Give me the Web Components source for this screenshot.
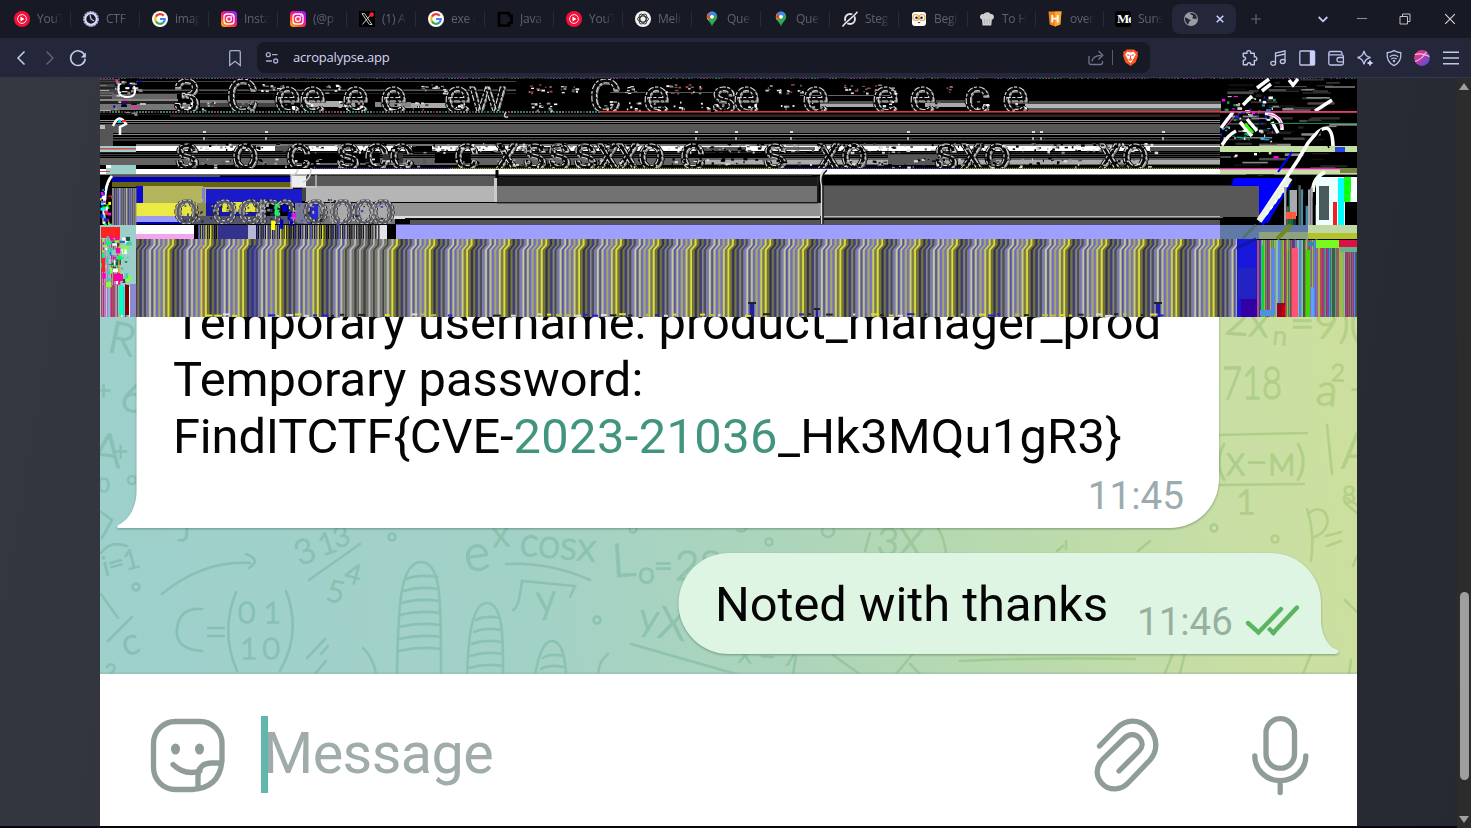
<!DOCTYPE html>
<html lang="en">
<head>
<meta charset="utf-8">
<title>acropalypse.app</title>
<style>
html,body{margin:0;height:100%;overflow:hidden;background:#171925;font-family:"Open Sans","Noto Sans",sans-serif}
</style>
</head>
<body>
<browser-window></browser-window>
<script>
const define=(name,html)=>customElements.define(name,class extends HTMLElement{
  connectedCallback(){
    if(this.shadowRoot)return;
    const t=document.createElement('template');
    t.innerHTML=typeof html==='function'?html(this):html;
    this.attachShadow({mode:'open'}).append(t.content.cloneNode(true));
  }
});

/* ---------- icons ---------- */
const yt='<circle cx="8" cy="8" r="8" fill="#f5103a"/><circle cx="8" cy="8" r="4.4" fill="none" stroke="#fff" stroke-width=".9"/><path d="M6.5 5.6v4.8L10.4 8z" fill="#fff"/>';
const google='<circle cx="8" cy="8" r="8" fill="#fff"/><g fill="none" stroke-width="2.2"><path d="M11.7 4.7A4.8 4.8 0 0 0 3.8 5.8" stroke="#ea4335"/><path d="M3.8 5.8a4.8 4.8 0 0 0 0 4.5" stroke="#fbbc05"/><path d="M3.8 10.3a4.8 4.8 0 0 0 7.4 1.3" stroke="#34a853"/><path d="M11.2 11.6A4.7 4.7 0 0 0 12.8 8H8" stroke="#4285f4"/></g>';
const insta='<defs><linearGradient id="g" x1="0" y1="1" x2=".8" y2="0"><stop offset="0" stop-color="#ffc21a"/><stop offset=".35" stop-color="#ff4a2a"/><stop offset=".65" stop-color="#f0109a"/><stop offset="1" stop-color="#a020f0"/></linearGradient></defs><rect width="16" height="16" rx="3.5" fill="url(#g)"/><rect x="3" y="3" width="10" height="10" rx="3" fill="none" stroke="#fff" stroke-width="1.3"/><circle cx="8" cy="8" r="2.4" fill="none" stroke="#fff" stroke-width="1.3"/><circle cx="10.9" cy="5.1" r=".8" fill="#fff"/>';
const pin='<path d="M8 .6a5.2 5.2 0 0 0-5.2 5.2C2.800 9.700 7 11 8 15.600 9 11 13.200 9.700 13.200 5.800A5.200 5.200 0 0 0 8 .6z" fill="#34a853"/><path d="M2.900 6.700A5.200 5.200 0 0 1 4 2.500L7 5.500 3.900 9.200z" fill="#fbbc04"/><path d="M4 2.500 7.200 5.200 4.400 8.500 2.800 6z" fill="#ea4335"/><path d="M4 2.400A5.200 5.200 0 0 1 12.500 3.200L9.500 6.500 7 5z" fill="#4285f4"/><circle cx="8" cy="5.800" r="1.900" fill="#fff"/>';
const ICONS={
 yt,google,insta,pin,
 ctf:'<circle cx="8" cy="8" r="6.700" fill="none" stroke="#a9a9dc" stroke-width="2.400" stroke-dasharray="2.200 .5"/><circle cx="8" cy="8" r="5.700" fill="none" stroke="#dcdcf4" stroke-width="1.900"/><path d="M7 4l1 4 3 2" fill="none" stroke="#b9b9e6" stroke-width="1.300"/>',
 x:'<rect width="16" height="16" fill="#000"/><path d="M3 2.700h2.600l7.400 10.800h-2.600zM12.500 2.700 3.400 13.500" fill="none" stroke="#ccc" stroke-width="1"/><circle cx="12.700" cy="3.600" r="2.300" fill="#f4212e"/>',
 java:'<path d="M2 2h10v2.500h2.500V12H12v2.500H2z" fill="none" stroke="#000" stroke-width="2.700"/>',
 gpt:'<circle cx="8" cy="8" r="8" fill="#f4f4f4"/><g fill="none" stroke="#333" stroke-width="1"><ellipse cx="8" cy="8" rx="5.400" ry="3"/><ellipse cx="8" cy="8" rx="5.400" ry="3" transform="rotate(60 8 8)"/><ellipse cx="8" cy="8" rx="5.400" ry="3" transform="rotate(120 8 8)"/></g>',
 slash:'<circle cx="8" cy="8" r="5" fill="none" stroke="#e4e4e4" stroke-width="1.900"/><path d="M2.500 13 13.500 2.500" stroke="#171925" stroke-width="3"/><path d="M.5 15.500c4-5.500 9.500-8 15-14.800" fill="none" stroke="#e4e4e4" stroke-width="1.500"/>',
 face:'<rect x="1" y="1" width="14" height="14" rx="3" fill="#fff"/><g fill="#fff" stroke="#e9a54e" stroke-width="1.100"><circle cx="4.900" cy="6.500" r="3"/><circle cx="11.100" cy="6.500" r="3"/></g><circle cx="5.500" cy="6.800" r="1.300" fill="#222"/><circle cx="10.500" cy="6.800" r="1.300" fill="#222"/><path d="M6.800 11.300q1.200 1 2.400 0" stroke="#333" fill="none"/>',
 chef:'<path d="M3.500 14.500 3 8.500C-.5 7.500 1 2 4.500 3.200 6 .5 10.500.5 11.500 3 15 2.200 16.500 7.500 12.800 8.800l-.5 5.700z" fill="#cfcfcf"/><path d="M5.500 8v5M8 8v5M10.500 8v5" stroke="#aaa" stroke-width=".7"/>',
 hack:'<path d="M1.500.5h13l-1.200 13L8 15.500l-5.300-2z" fill="#ee8420"/><path d="M8 .5h6.500l-1.200 13L8 15.500z" fill="#ffa62b"/><path d="M5.300 4v7.500M10.700 4v7.500M5.300 7.700h5.400" stroke="#fff" stroke-width="1.800"/>',
 globe:'<circle cx="8" cy="8" r="7" fill="#9b9ca1"/><path d="M2 6.500c2.500 0 2.500 1.500 4.500 2 2 .5 1 2-.5 2l-.5 3C3 12.500 1.500 9.500 2 6.500zM7 2c0 2 3 1.500 3 3s-1.500 1.500 0 2.500 2.500-.5 3.500 1C14.500 5 12 1.500 7 2z" fill="#242639"/>',
 close:'<path d="M4.700 4.700l6.600 6.600M11.300 4.700l-6.600 6.600" stroke="#cfd3ff" stroke-width="1.500"/>',
 plus:'<path d="M8 3v10M3 8h10" stroke="#6a6c80" stroke-width="1.100"/>',
 down:'<path d="M3.700 6l4.300 4.300L12.300 6" fill="none" stroke="#c6cbf4" stroke-width="1.800"/>',
 min:'<path d="M2.800 7.500h10.400" stroke="#8b8b90" stroke-width="1.100"/>',
 restore:'<path d="M3 5.500h7.500v7.500H3zM5.500 5.200V3h7.500v7.500h-2.300" fill="none" stroke="#c2c2c2" stroke-width="1"/>',
 wclose:'<path d="M3.200 3.200l9.600 9.600M12.800 3.200l-9.600 9.600" stroke="#d8d8d8" stroke-width="1.100"/>',
 back:'<path d="M11.500 1.500 5 8l6.500 6.500" fill="none" stroke="#c8cdf0" stroke-width="1.500"/>',
 fwd:'<path d="M5.500 1.500 12 8l-6.500 6.500" fill="none" stroke="#61647a" stroke-width="1.400"/>',
 reload:'<path d="M14.400 4.800A7.300 7.300 0 1 0 15.200 8.600" fill="none" stroke="#c8cdf0" stroke-width="1.500"/><path d="M15.900 2.600v5h-5z" fill="#c8cdf0"/>',
 bookmark:'<path d="M2.700 2.200q0-1.500 1.500-1.500h7.600q1.500 0 1.500 1.500v13.300L8 11.300l-5.300 4.200z" fill="none" stroke="#a9aed2" stroke-width="1.300"/>',
 tune:'<g fill="none" stroke="#a9aed2" stroke-width="1.300"><circle cx="4.300" cy="4.700" r="2"/><path d="M8 4.700h5.500M2 11h6"/><circle cx="11.700" cy="11" r="2"/></g>',
 share:'<path d="M1 6v6.500q0 2 2 2h9.500q2 0 2-2V11M4 11.500C4.500 7 8 5.500 13.500 5.300M10.500 1l4.300 4.300-4.300 4.200" fill="none" stroke="#71758d" stroke-width="1.300"/>',
 brave:'<path d="M4.500.5h7l1.700 1.600 1.800.4-.4 2.200.5 1.300-2.200 6.500L8 16l-4.900-3.500L.900 6l.5-1.300L1 2.500l1.800-.4z" fill="#fb5424"/><path d="M8 3.200l3-.7 2 2.600-2.300 4.300-1 2.200L8 13.200l-1.700-1.600-1-2.200L3 5.100l2-2.600z" fill="#fff"/><path d="M4.800 5.500l2.200.7M11.200 5.500 9 6.200M8 6v3l-1.300 1 1.300.8 1.300-.8L8 9" fill="none" stroke="#fb5424"/>',
 puzzle:'<path d="M1.300 3.200H5c-1-3.400 4.600-3.400 3.600 0h3.700v3.700c3.400-1 3.400 4.600 0 3.600v4.300H8.800c.6-2.800-4-2.800-3.500 0h-4v-4.300c3-.4 3-3.600 0-3.700z" fill="none" stroke="#bfc4ea" stroke-width="1.400" stroke-linejoin="round"/>',
 music:'<g fill="none" stroke="#bfc4ea" stroke-width="1.300"><path d="M5.500 13V3L15 .8v10.400M5.500 6.200 15 4"/><ellipse cx="3.200" cy="13.300" rx="2.400" ry="2"/><ellipse cx="12.700" cy="11.500" rx="2.400" ry="2"/></g>',
 side:'<rect x=".8" y="1" width="14.800" height="14" rx="1" fill="none" stroke="#bfc4ea" stroke-width="1.300"/><path d="M10.800 1h4.800v14h-4.800z" fill="#c8d0fb"/>',
 wallet:'<g fill="none" stroke="#bfc4ea" stroke-width="1.300"><path d="M14 4.800V3.500q0-2-2-2H2.500q-1.700 0-1.700 1.700t1.700 1.600h11.200q1.700 0 1.700 1.700v6.800q0 1.700-1.700 1.700H2.800q-2 0-2-2V3.500"/><path d="M15.400 7.500H11q-2 0-2 2.200t2 2.100h4.400"/></g>',
 spark:'<path d="M7 .8Q8 6.400 13.500 7.500 8 8.600 7 14.500 6 8.600.5 7.500 6 6.400 7 .8z" fill="none" stroke="#bfc4ea" stroke-width="1.300"/><path d="M13 10.500v5M10.500 13h5" stroke="#c8d0fb" stroke-width="1.900"/>',
 shield:'<path d="M8 .6q3.500 2 6.800 2C15.300 8 14 13 8 15.600 2 13 .7 8 1.200 2.600q3.300 0 6.800-2z" fill="none" stroke="#bfc4ea" stroke-width="1.300"/><path d="M3.800 6.800q4.200-3.200 8.400 0M5.300 9q2.700-2 5.400 0" fill="none" stroke="#bfc4ea" stroke-width="1.200"/><circle cx="8" cy="11" r="1.200" fill="#bfc4ea"/>',
 avatar:'<defs><linearGradient id="a" x1="0" y1="0" x2="1" y2="1"><stop offset="0" stop-color="#f03a78"/><stop offset=".5" stop-color="#b33ba8"/><stop offset="1" stop-color="#2e5be8"/></linearGradient></defs><circle cx="8" cy="8" r="7.900" fill="url(#a)"/><path d="M.8 4.500C5 3.500 11 4 15.500 6.500M1 11.500C6 10 10 6 12.500 1.800" fill="none" stroke="#f5bfe0" stroke-width="1.100"/>',
 menu:'<path d="M0 2.300h16M0 8h16M0 13.700h16" stroke="#c3c8e6" stroke-width="1.400"/>'
};
define('ui-icon',el=>`<style>:host{display:block;flex:none;width:16px;height:16px}svg{display:block;width:100%;height:100%;overflow:visible}</style><svg viewBox="0 0 16 16">${ICONS[el.getAttribute('name')]}</svg>`);

/* ---------- browser chrome ---------- */
define('browser-tab',`<style>
:host{display:flex;box-sizing:border-box;flex:none;width:69px;height:38px;padding-left:10px;align-items:center}
:host([narrow]){width:68px}
span{font-size:12px;line-height:20px;color:#606274;margin-left:7px;width:25px;overflow:hidden;white-space:nowrap;letter-spacing:-.25px;-webkit-mask:linear-gradient(90deg,#000 60%,transparent);mask:linear-gradient(90deg,#000 60%,transparent)}
i{width:1px;height:16px;background:#292b3b;margin-left:8px}
:host([last]) i{visibility:hidden}
</style><slot name="icon"></slot><span><slot></slot></span><i></i>`);

const TABS=[['yt','YouT'],['ctf','CTF'],['google','imag'],['insta','Insta'],['insta','(@p'],['x','(1) A'],['google','exe o'],['java','Java'],['yt','YouT'],['gpt','Meli'],['pin','Que'],['pin','Que'],['slash','Steg'],['face','Begi'],['chef','To H'],['hack','over'],['medium','Suns']];
define('medium-mark',`<style>:host{display:block;flex:none;width:16px;height:16px;border-radius:3px;background:#000;color:#fff;overflow:hidden;font:bold 13px/15px "Liberation Serif",serif;letter-spacing:-1px;text-indent:2px}</style>Me`);
define('tab-strip',`<style>
:host{display:flex;height:38px;flex:none;background:#171925;padding-left:4px;align-items:center}
.active{display:flex;flex:none;box-sizing:border-box;width:64px;height:30px;border-radius:8px;background:#242639;align-items:center;padding:0 8px 0 11px;justify-content:space-between;margin-left:-2px}
.w{display:flex;flex:none;justify-content:center}
</style>${TABS.map(([n,t],i)=>`<browser-tab ${i>12?'narrow':''} ${i==16?'last':''}>${n=='medium'?'<medium-mark slot="icon"></medium-mark>':`<ui-icon slot="icon" name="${n}"></ui-icon>`}${t}</browser-tab>`).join('')}
<div class="active" style="margin-left:-1px"><ui-icon name="globe"></ui-icon><ui-icon name="close"></ui-icon></div>
<div class="w" style="width:40px"><ui-icon name="plus"></ui-icon></div>
<div class="w" style="width:94px"><ui-icon name="down"></ui-icon></div>
<div class="w" style="width:16px;margin-left:-16px"><ui-icon name="min"></ui-icon></div>
<div class="w" style="width:43px;margin-left:13.500px"><ui-icon name="restore"></ui-icon></div>
<div class="w" style="width:46px"><ui-icon name="wclose"></ui-icon></div>`);

define('tool-bar',`<style>
:host{display:flex;box-sizing:border-box;height:40px;flex:none;background:#242639;padding-left:7px;align-items:center;border-bottom:1px solid #34364d}
.b{display:flex;width:28.800px;flex:none;justify-content:center}
.url{display:flex;box-sizing:border-box;width:893px;height:31px;border-radius:8px;background:#171925;margin:0 85.200px 0 8px;padding:0 11px 0 7px;align-items:center}
.t{flex:1;margin:-2px 0 0 13px;font-size:13px;line-height:20px;color:#d3d6f0;letter-spacing:-.2px}
.s{width:1px;height:15px;background:#5b5d6e;margin:0 9.500px 0 8px}
</style>
<div class="b" style="width:28px"><ui-icon name="back"></ui-icon></div><div class="b" style="width:28px"><ui-icon name="fwd"></ui-icon></div><div class="b" style="width:29.500px"><ui-icon name="reload"></ui-icon></div>
<div class="b" style="width:28px;margin-left:128.500px"><ui-icon name="bookmark"></ui-icon></div>
<div class="url"><ui-icon name="tune"></ui-icon><span class="t">acropalypse.app</span><ui-icon name="share"></ui-icon><span class="s"></span><ui-icon name="brave" style="width:17px;height:17px"></ui-icon></div>
${['puzzle','music','side','wallet','spark','shield','avatar','menu'].map(n=>`<div class="b"><ui-icon name="${n}"></ui-icon></div>`).join('')}`);

/* ---------- chat wallpaper: hand-drawn maths ---------- */
define('chat-wallpaper',()=>{
  const tx=(x,y,s,t,r=0,ex='')=>`<text x="${x}" y="${y}" font-size="${s}" ${r?`transform="rotate(${r} ${x} ${y})"`:''} ${ex}>${t}</text>`;
  const ring=(x,y,r=3.500)=>`<circle cx="${x}" cy="${y}" r="${r}"/>`;
  const dome=(l,r,top,b,n,off)=>{let s=`<path d="M${l} ${b}C${l+1} ${top+45} ${l+3} ${top} ${(l+r)/2+2} ${top}S${r} ${top+40} ${r} ${b}"/>`;
    for(let i=0;i<n;i++){const y=top+15+i*off;const k=Math.max(0,7-i*2);s+=`<path d="M${l+k+2} ${y+2}Q${(l+r)/2} ${y-3} ${r-k/2} ${y}"/>`}return s};
  return `<style>:host{display:block;position:absolute;inset:0}svg{display:block}text{font-family:Lato,"Open Sans",sans-serif;font-weight:300;stroke-width:1.400}</style>
<svg width="1257" height="596" viewBox="100 78 1257 596"><defs>
<linearGradient id="bg" gradientUnits="userSpaceOnUse" x1="100" y1="600" x2="1357" y2="480"><stop offset="0" stop-color="#9ed0cc"/><stop offset=".33" stop-color="#a2d1c7"/><stop offset=".55" stop-color="#add5bb"/><stop offset=".72" stop-color="#b9daad"/><stop offset=".88" stop-color="#c7dea5"/><stop offset="1" stop-color="#ccdf9e"/></linearGradient>
<linearGradient id="ink" gradientUnits="userSpaceOnUse" x1="100" y1="0" x2="1357" y2="0"><stop offset="0" stop-color="#86c0b6"/><stop offset=".45" stop-color="#8dc3ae"/><stop offset=".7" stop-color="#a0cb96"/><stop offset="1" stop-color="#b4d084"/></linearGradient></defs>
<rect x="100" y="78" width="1257" height="596" fill="url(#bg)"/>
<g fill="none" stroke="url(#ink)" stroke-width="2.600" stroke-linecap="round">
<path d="M162 594Q203 560 250 563M246 554Q262 560 249 568M309 580 360 544M236 592Q220 632 237 671M286 591Q302 632 280 671M202 609Q180 607 177 628T202 651M208 628h16M208 636h16M307 658l18-19M321 654l7-8M315 674l11-13M363 648q10 9 13 26M101 553Q110 540 127 546M101 512l11 8-10 18M108 641l24-24M101 594l17 24"/>
${ring(392,537)}${ring(136,587)}${ring(132,480,4)}${dome(397,441,562,676,7,12)}${dome(467,503,603,676,5,12)}${dome(534,566,641,676,3,11)}
<path d="M506 564Q550 562 590 580M513 610q6-2 9-29l53 5-5 11M631 644l112 32M598 674q1-13 10-20M865 551l5-18M938 528q6 10 8 24M896 674l20-24M910 664l12 12M833 655l28 20M793 674l3-18"/>
${ring(597,620)}${ring(769,542)}${ring(633,529)}${ring(828,531,6)}${ring(1214,528)}${ring(1275,539)}
<path d="M1219 435l88-2M1219 485l85-1M1327 425l5 49M1307 509q8 24 4 52M1309 513c17-14 29 16 5 24M1326 536l15-4M1327 546l14-5M1347 498l10 7M1345 503l12 10M1057 551l6-5M1066 541v8M1138 551l12-10M960 661q90-4 175-2M1165 673l8-20M1180 673l5-20M1303 674l8-20M1349 674l2-14M1345 600l12 12M1357 556l-4 10"/>
</g><g fill="url(#ink)" stroke="url(#ink)">
${tx(106,351,44,'R',12)}${tx(119,410,44,'6',8)}${tx(96,399,26,'+')}${tx(90,464,46,'A',8)}${tx(113,460,26,'+')}${tx(98,492,20,'0')}${tx(105,576,27,'i=1',-15)}${tx(125,656,36,'c',-15)}${tx(105,678,20,'2')}
${tx(178,541,30,'J')}${tx(300,566,34,'3',-22)}${tx(322,556,30,'1',-18)}${tx(336,548,28,'3',-15)}${tx(325,600,30,'5',12)}${tx(343,581,28,'4',15)}
${tx(238,623,30,'01',0,'letter-spacing="8"')}${tx(240,659,30,'10',0,'letter-spacing="5"')}
${tx(466,572,50,'e',-8)}${tx(493,547,36,'x',-4)}${tx(519,555,40,'cosx',5,'textLength="76" lengthAdjust="spacingAndGlyphs"')}${tx(537,613,40,'y',-4)}
${tx(613,577,46,'L',-4)}${tx(638,583,30,'o')}${tx(654,577,32,'=')}${tx(675,580,42,'28')}${tx(638,629,38,'y',8)}${tx(657,637,44,'X',8)}${tx(738,662,28,'x = 7',4)}
${tx(876,554,38,'3X',4)}${tx(735,532,24,'5')}${tx(1224,334,42,'2x',4)}${tx(1272,344,26,'n',6)}${tx(1290,338,42,'=9)(')}
${tx(1222,399,46,'718',0,'textLength="60" lengthAdjust="spacingAndGlyphs"')}${tx(1315,404,44,'a',6)}${tx(1331,381,24,'2')}${tx(1350,398,30,'-')}${tx(1341,468,50,'A')}${tx(1216,475,42,'(x–м)',0,'textLength="90" lengthAdjust="spacingAndGlyphs"')}${tx(1236,514,34,'1')}${tx(1342,503,24,'8')}
</g>
<rect x="100" y="672" width="1257" height="2" fill="#8fb3a5" opacity=".35"/></svg>`;
});

/* ---------- corrupted upper part of the recovered picture ---------- */
define('glitch-band',()=>{
  let seed=77;const R=()=>(seed=(seed*16807)%2147483647)/2147483647;
  const pick=a=>a[Math.floor(R()*a.length)];
  let o='';
  const r=(x,y,w,h,c)=>{o+=`<rect x="${+x.toFixed(1)}" y="${+y.toFixed(1)}" width="${+w.toFixed(1)}" height="${+h.toFixed(1)}" fill="${c}"/>`};
  const P=(d,c,w=1,ex='')=>{o+=`<path d="${d}" fill="none" stroke="${c}" stroke-width="${w}" ${ex}/>`};
  r(100,78,1257,239,'#000');
  const neon=['#f0f','#0f0','#00f','#ff0','#0ff','#f02030','#fff','#3020c0','#000','#90e040'];
  for(let x=100;x<1357;x+=3)r(x,77.500,2,1.200,pick(['#b050b0','#40a060','#444','#6050a0','#222']));
  /* first strip */
  [[81,'#444'],[89,'#333'],[90,'#555'],[93,'#222']].forEach(([y,c])=>r(136,y,380,1,c));
  r(100,79,20,32,'#444');
  for(let y=80;y<112;y+=2.500)r(100,y,6+R()*16,1,pick(['#000','#777','#aaa','#222']));
  r(112,94,65,5,'#666');r(100,99,78,2,'#888');r(100,101,78,3,'#222');r(100,104,90,6,'#777');r(200,100,110,3,'#777');r(200,103,80,4,'#444');
  r(300,101,55,6,'#aaa');r(402,103,50,5,'#aaa');r(375,102,36,5,'#888');
  r(610,92,120,1,'#555');r(800,95,90,1,'#666');r(820,101,56,3,'#555');r(820,104,56,3,'#aaa');r(925,100,42,3,'#444');r(925,103,42,4,'#aaa');
  r(1010,101,211,3,'#4a4a4a');r(1025,104,196,4,'#b5b5b5');r(1010,108,211,3,'#555');
  for(let x=100;x<600;x+=3)r(x,111.300,2,1.400,pick(['#e05060','#40c080','#555','#9a8','#40a0b0']));
  r(600,111,758,1.600,'#e03838');
  /* second strip */
  r(100,114,1120,1,'#1a1a1a');r(170,115,1050,2,'#282828');r(100,120,1120,1,'#999');r(100,122,1120,1,'#777');r(100,124,1120,9,'#575757');r(100,134,1120,1,'#888');r(100,137,1120,1,'#555');r(100,139,1120,2,'#3a3a3a');
  r(100,124,13,22,'#555');r(100,125,5,4,'#bbb');
  /* third strip */
  r(136,144,1084,2,'#777');r(136,146,1084,5,'#fff');r(275,146,16,5,'#555');r(300,146,38,5,'#fff');r(412,146,20,5,'#000');r(700,147,46,4,'#555');r(535,147,22,4,'#222');r(1150,147,70,4,'#555');r(765,147,50,3,'#666');
  r(100,152,1120,1,'#222');r(100,154,1120,1,'#444');r(100,156,1120,1,'#333');r(100,158,1120,7,'#626262');r(290,153,90,10,'#000');r(383,153,20,10,'#333');r(435,153,36,10,'#000');r(685,153,85,5,'#000');r(700,160,520,4,'#aaa');r(888,155,50,10,'#555');r(100,165,1120,1,'#000');
  for(let x=310;x<1220;x+=2)r(x,167.800,1.400,1,x<450||(x>780&&x<960)?'#4a4ae0':'#b5b545');
  r(100,169,1257,5.500,'#fff');
  r(112,175,108,2,'#555');r(112,174.500,700,1,'#555');
  /* block shapes */
  r(112,177,180,5,'#0000b4');r(112,182,180,5,'#646414');
  r(136,186,67,17,'#b4b45c');r(136,186,7,17,'#0a0ad0');r(203,187,90,16,'#b0b060');r(202,188,3,15,'#8080d8');r(206,189,96,14,'#1a1ac8');
  r(305,176,192,10,'#585858');r(305,186,192,16,'#b5b5b5');r(494,178,3,24,'#ccc');r(497,177,321,9,'#1a1a1a');r(497,186,320,16,'#727272');r(305,203,516,13,'#939393');r(302,186,4,15,'#444');
  r(823,175,397,10,'#000');r(823,185.500,436,31,'#585858');
  r(136,203,41,13,'#eaea42');r(177,203,30,13,'#e5e540');r(197,203,9,13,'#8f8f50');r(206,203,60,14,'#1717a8');r(222,202,40,10,'#e5e540');r(136,216,46,7,'#9a9af8');r(136,222,46,2,'#00a');
  r(182,216,123,8,'#55556a');r(305,216,90,8,'#777');
  r(350,216,470,3,'#ddd');r(405,218,816,1.500,'#111');r(410,220,410,4,'#555');r(823,216,400,1.600,'#b8b8b8');r(823,220,397,4,'#555');
  r(295,203,25,20,'#777796');r(308,203,10,16,'#2828d0');r(330,205,60,16,'#aaa');
  P('M291 175h16M291 175v12h25v-12M292 174v13','#ccc',1.300);r(292,176,14,11,'#eee');r(307,178,8,8,'#555');
  P('M818 176v27h-321','#333',1);P('M825 170q-6 4-3 16v38','#ddd',2.500);P('M827 170q-7 6-4 16v38','#111',1.500);P('M497 170v8','#000',3);
  /* lavender bar */
  r(136,225,58,9,'#fff');r(136,234,58,5,'#f5a5ef');r(396,224.500,824,14.500,'#9f9fff');
  r(376,225,11,14,'#e2e2ea');
  /* fine stripes, with a wider beat every 37.33px */
  const cols=['#dede38','#77773a','#30305c','#76763e','#3a3a92','#84848e','#4a4a62','#7676cc','#c8c8a4','#5656a8','#bdbd9c','#6a6ad0','#a8a86c','#7474c4','#d0d064','#7c7c3c'];
  r(136,239,1102,78,'#66664e');
  for(let x=136,i=2;x<1238;x+=2.333,i++){
    let c=cols[i%16];if(x>340&&x<388)c=i%2?'#777':(i%4?'#b7b7c4':'#444');
    P(`M${(x+4.500).toFixed(1)} 239v6L${x.toFixed(1)} 250V317`,c,i%16?1.800:2.100);
    P(`M${(x+5.700).toFixed(1)} 239v6L${(x+1.200).toFixed(1)} 250V317`,i%16<6?'#44442c':'#c8c8b0',.4);
    if(x>193&&x<375)r(x+4,225,1.600,14,c);
  }
  r(218,225,30,14,'#33338e');r(248,225,8,14,'#b6b6d6');r(248,245,9,72,'rgba(40,40,170,.45)');
  r(202,245,1,72,'#c85');
  /* upper left noise */
  for(let i=0;i<45;i++)r(112+R()*28,79+R()*35,1+R()*5,1+R()*1.500,pick(['#fff','#888','#000','#f2a','#00a','#ccc']));
  P('M119 84q-3 13 8 13t7-11','#fff',2);P('M113 126q6-14 13-2l-6 3v8','#fff',2.500);
  r(118,120,3,3,'#0cf');r(122,120,4,2,'#f31');
  r(100,146,36,6,'#9ccfca');r(100,148,36,1.500,'#d44');r(106,165,30,9,'#9ccfca');r(100,171,10,1,'#d44');r(106,165,5,3,'#fff');
  P('M112 176q-9 8-8 48','#fff',3);
  /* left edge */
  for(let x=112;x<136;x+=2.300)r(x,188,1.400,37,pick(['#8f8f50','#9999e8','#555580','#c5c570','#777']));
  for(let x=113;x<136;x+=2.300)r(x,188,1.100,37,'#7c7cae');
  for(let i=0;i<34;i++)r(100+R()*9,188+R()*36,1+R()*4,1+R()*3,pick(neon));
  r(100,225,36,92,'#9ccfca');r(101,227,19,11,'#ff2222');
  for(let x=101;x<136;x+=2)r(x,284+R()*3,1.500,33,pick(['#19db95','#0f0','#ff5a9e','#4cc','#700','#7030a0','#fff','#7bb']));
  for(let x=101;x<120;x+=2)r(x,239,1.300,80,pick(['#0e0','#f09','#6cc','#a44','#fa0','#30a030','#c070d0']));
  for(let i=0;i<90;i++)r(101+R()*26,235+R()*48,1+R()*5,1+R()*5,pick(['#0f6','#f0a','#40cfa0','#2070d0','#205040','#8fcfc4','#fff','#8f3','#8fcfc4','#b060ff']));
  r(102,258,3,14,'#f22');r(114,274,9,7,'#ff0096');r(119,285,4,30,'#00ffc8');r(125,285,4,30,'#800000');r(130,284,6,33,'#8a8acc');
  /* right side, above the bars */
  for(let i=0;i<85;i++)r(1220+R()*110,79+R()*95,5+R()*28,1+R()*1.700,pick(['#222','#4a4a4a','#111','#888','#333']));
  for(let i=0;i<95;i++)r(1220+R()*55,95+R()*62,1+R()*4,1+R()*2,pick(['#fff','#aaa','#f0f','#0a4','#0ad','#ddd','#000','#22f']));
  P('M1257 88l12-9M1262 91l9-7M1289 80l4 5 5-6M1243 105l9-9M1315 111l17-11M1221 128l12-16M1265 113q18 3 17 17M1222 145q6-10 14-14M1240 122l12 14M1247 119l10 12M1272 122l6 11','#fff',3.500);
  P('M1245 124l8 9','#3f0',3);P('M1224 129l10-12M1268 114q15 2 13 14','#f3d',1);
  r(1220,111,137,1.600,'#dc4080');r(1270,123,87,1,'#284');r(1220,146,137,6,'#c5dea2');r(1335,147,10,5,'#2845e8');r(1220,169,137,5,'#c5dea2');r(1220,168,120,1.300,'#f018b8');r(1340,168,17,5,'#78863d');
  o+='<path d="M1231 186l3-8h58l-30 50v-42z" fill="#00f"/><path d="M1259 186v37h9l14-24 10-16z" fill="#00f"/>';
  r(1220,186,39,31,'#585858');
  P('M1259 219L1298 160 1308 143Q1332 112 1333 146','#fff',3.600);P('M1313 197q-2-18 12-25','#f6ffef',4);P('M1313 143l8-13 8 18','#000',1.500);P('M1278 172l14-20','#00f',2);
  P('M1259 221L1290 178','#e9f3df',6);P('M1266 215l22-30','#fff',2,'stroke-dasharray="4 3"');
  for(let x=1284;x<1318;x+=2.400)r(x,181+R()*28,2.400,44,pick(['#a5a5ad','#7070b0','#137540','#000','#556055','#e12','#c0c060','#48a','#203040']));
  r(1290,190,7,26,'#a9a9b4');r(1286,212,10,7,'#ff5a3c');
  r(1316,177,41,48,'#efffff');r(1319,186,10,34,'#4a5a5a');r(1333,202,4,23,'#ef2020');r(1338,178,6,47,'#0ff');r(1344,177,7,25,'#1f1');r(1345,202,12,23,'#000');P('M1352 202q0-18 3-24','#fff',3);
  r(1220,225,88,14,'#5f7aa5');r(1259,232,49,7,'#8da37f');r(1308,225,49,8,'#c0d8a3');r(1308,233,49,6,'#b3c42a');P('M1242 239l14-14','#556f78',3);P('M1277 239l14-14','#73891e',4);
  /* right bottom */
  r(1237,239,20,78,'#1616dc');r(1238,268,18,31,'#2222c5');r(1241,299,16,18,'#3300a6');P('M1237 248l19-9','#1018a0',3);
  const rc=['#96bf3c','#aa3a89','#58a080','#6080ec','#b84b75','#42603f','#7fc3a8','#9b6aa9','#ba4b4e','#3a46b4','#a5b840','#7a7a88'];
  for(let x=1257;x<1357;x+=2.100)r(x,240,2.100,77,pick(rc));
  r(1262,245,2,72,'#00dd28');r(1271,248,4,62,'#5c80ff');r(1292,248,6,69,'#ff5475');r(1306,250,4,67,'#46d400');r(1311,287,3,30,'#55a5ff');
  r(1316,240,23,8,'#78f820');r(1339,240,18,7,'#dc1049');r(1308,242,6,4,'#2090b0');r(1340,247,17,5,'#6ab08c');r(1277,303,8,14,'#a00020');r(1260,310,15,6,'#5090e0');r(1282,306,3,10,'#c00');
  /* residue of the overwritten letters: one run per row, each letter at its own x */
  const run=(y,s,list,cls)=>{o+=`<text class="${cls}" y="${y}" font-size="${s}" x="${list.map(a=>a[1]).join(' ')}">${list.map(a=>a[0]).join('')}</text>`};
  o+='<g clip-path="url(#r1)">';
  run(113,49,[['3',173],['C',226],['e',274],['e',299],['e',342],['e',380],['e',444],['w',469],['C',589],['e',643],['s',711],['e',733],['e',802],['e',872],['e',909],['c',964],['e',1002]],'res');
  o+='</g><g clip-path="url(#r2)">';
  run(169,46,[['s',175],['o',232],['c',286],['s',336],['c',364],['c',389],['c',454],['x',495],['s',523],['s',547],['s',573],['x',596],['x',616],['o',638],['c',680],['s',763],['x',817],['o',841],['s',934],['x',960],['o',984],['x',1098],['o',1122]],'res');
  o+='</g><g clip-path="url(#r3)">';
  run(224,44,[['o',174],['o',212],['o',238],['m',258],['o',303],['o',330],['o',352],['o',370]],'soft');
  o+='</g>';
  for(let i=0;i<8;i++)r(264+R()*26,203+R()*18,3+R()*3,4+R()*6,pick(['#0ee','#0f6','#fff','#f0f','#ff0','#00c']));
  for(let i=0;i<110;i++){const x=178+R()*212;r(x,199+R()*24,1+R()*2,1+R()*2,pick(['#bbb','#222','#333','#888','#44a']))}
  const spots=[260,268,276,325,334,421,430,438,525,535,545,560,570,622,630,665,674,685,693,764,775,785,795,842,850,862,872,890,946];
  spots.forEach(x=>{for(let k=0;k<5;k++)r(x+R()*7,84+R()*9,1+R()*3,1+R(),pick(['#ddd','#999','#666','#fff','#a44']))});
  [180,200,238,280,305,334,350,388,412,450,530,538,545,598,625,650,670,700,715,745,780,810,880,925,976,1012].forEach(x=>{for(let k=0;k<8;k++)r(x+R()*14,101+R()*9,1+R()*2.500,1+R()*1.500,pick(['#ddd','#999','#fff','#777','#000']))});
  for(let i=0;i<380;i++){const x=178+R()*980;r(x,143+R()*9,1+R()*3,1+R()*1.500,pick(['#ddd','#000','#999','#000','#555']))}
  for(let i=0;i<300;i++){const x=178+R()*980;r(x,158+R()*9,1+R()*3,1+R()*1.500,pick(['#ddd','#000','#999','#000','#555']))}
  [203,265,695,735,790,907,1032,1040,1162].forEach(x=>{r(x,131,3,2,'#ddd');r(x,137,2,3,'#aaa');r(x+4,137,1,3,'#336')});
  P('M506 112q-4 6 2 5M290 174q6 3 8-5M311 168q0 12-8 14','#ccc',1.500);
  [[748,302,8,14],[814,308,6,9],[1154,302,8,15]].forEach(([x,y,w,h])=>{r(x,y,w,2,'#222');r(x+2,y+2,w-4,h,'#2020a0')});
  for(let x=205;x<1160;x+=9)if(R()>.3)r(x,313+R()*2,2+R()*6,2,pick(['#2020e0','#222','#e0e020','#c0c040','#ddd']));
  return `<style>:host{display:block;position:absolute;left:0;top:0;width:1257px;height:239px;overflow:hidden}svg{display:block}
text{font-family:Roboto,sans-serif;stroke-width:1.100}
.res{fill:#0a0a0a;stroke:#d8d8d8;stroke-dasharray:3 2 6 1.500;filter:drop-shadow(-1px 0 0 #000) drop-shadow(1px 1px 0 #888) drop-shadow(1px 0 0 #000)}
.soft{fill:rgba(136,136,160,.45);stroke:#ccc;stroke-dasharray:3 2;filter:drop-shadow(1px 0 0 #222) drop-shadow(-1px 0 0 #333)}</style>
<svg width="1257" height="239" viewBox="100 78 1257 239" aria-hidden="true"><defs><clipPath id="r1"><rect x="100" y="79" width="1120" height="32"/></clipPath><clipPath id="r2"><rect x="100" y="141" width="1120" height="27"/></clipPath><clipPath id="r3"><rect x="100" y="198" width="400" height="26"/></clipPath></defs>${o}</svg>`;
});

/* ---------- chat ---------- */
define('message-in',`<style>
:host{display:flex;flex-direction:column;box-sizing:border-box;position:relative;margin-left:36px;width:1083px;height:450px;padding:216px 35px 0 37px}
svg{position:absolute;left:-20px;top:0;overflow:visible;filter:drop-shadow(0 1.500px 1px rgba(60,90,70,.5))}
time{position:relative;white-space:nowrap;font:38.700px/45px Roboto,sans-serif;color:#9cacae;align-self:flex-end;margin-top:8px}
</style><svg width="1104" height="451"><path d="M20.500 0V413C20.500 430 12 443 2 447Q0 450 3 450H1054A49 49 0 0 0 1103 401V0z" fill="#fff"/></svg><slot></slot><time><slot name="time"></slot></time>`);
define('text-line',`<style>:host{display:block;position:relative;white-space:nowrap;font:48.800px/57px Roboto,sans-serif;color:#050505}</style><slot></slot>`);
define('message-out',`<style>
:host{display:flex;box-sizing:border-box;position:relative;margin:25px 0 0 579px;width:642px;height:101px;padding-left:36px;align-items:flex-start}
.bg{position:absolute;left:0;top:0;overflow:visible;filter:drop-shadow(0 1.500px 1px rgba(60,90,70,.5))}
text-line{margin-top:22.500px;width:422px;letter-spacing:-.04px}
time{position:relative;font:38.500px/45px Roboto,sans-serif;color:#97b19f;margin-top:46px;width:107.500px}
.ck{position:relative;margin-top:50px;flex:none}
</style><svg class="bg" width="662" height="101"><path d="M50 0H592A50 50 0 0 1 642 50V65C642 82 649 94 659 97Q661 100 657 101H50A50.500 50.500 0 0 1 50 0z" fill="#def5e4"/></svg>
<text-line><slot></slot></text-line><time><slot name="time"></slot></time>
<svg class="ck" width="54" height="34" fill="none" stroke="#5db45f" stroke-width="4.400"><path stroke-linecap="round" d="M3 20l10.500 9.500L36 6"/><path d="M25 26.500l3.500 3.500" stroke-linecap="square"/><path stroke-linecap="round" d="M28 30L52 4.500"/></svg>`);
define('message-composer',`<style>
:host{display:flex;box-sizing:border-box;height:152px;background:#fff;padding-left:50px;align-items:flex-start;flex:none}
svg{display:block;flex:none;fill:none;stroke:#909c99;stroke-width:5.300;stroke-linecap:round}
.c{width:7px;height:77px;background:#62b6ab;margin:42px 0 0 35px;position:relative}
.p{font:57.500px/68px Roboto,sans-serif;letter-spacing:-.55px;color:#a0acab;margin:46px 0 0 -5px;width:831px}
</style>
<svg width="76" height="76" style="margin-top:44px"><path d="M72 42V25.500A22 22 0 0 0 50 3.500H25.500A22 22 0 0 0 3.500 25.500V49.500A22 22 0 0 0 25.500 71.500H42Q70 70 72 42M71 45H62Q48 45 48 59V70M23 46.500Q35 58 50 53"/><g fill="#909c99" stroke="none"><ellipse cx="25.500" cy="31" rx="4.500" ry="5.500"/><ellipse cx="49.500" cy="31" rx="4.500" ry="5.500"/></g></svg>
<span class="c"></span><span class="p">Message</span>
<svg width="68" height="80" viewBox="1094 714 68 80" style="margin-top:40px"><path d="M1099.500 746L1117 728C1126 719 1139 719 1148 727.500C1158 737 1158 751 1150 760L1129 782C1121 791 1109 791 1102 783.500C1095 776 1096 766 1103 759L1124.500 738C1129.500 733 1136 734 1139.500 738C1143.500 742.500 1142.500 747.500 1139 751L1119 771"/></svg>
<svg width="62" height="84" viewBox="1249 714 62 84" style="margin:40px 0 0 87px"><rect x="1266" y="718.700" width="28.500" height="49.500" rx="14.200"/><path d="M1254.800 756c0 13 10.500 24.700 25.500 24.700s25.500-11.700 25.500-24.700M1280.200 781v11.500"/></svg>`);
define('chat-picture',`<style>
:host{display:flex;flex-direction:column;width:1257px;height:750px;flex:none}
.room{position:relative;height:596px;overflow:hidden;flex:none}
.a{letter-spacing:-.12px}.k{color:#41957f;letter-spacing:.42px}.z{letter-spacing:.26px}
</style><div class="room"><chat-wallpaper></chat-wallpaper>
<message-in><text-line>Temporary username: product_manager_prod</text-line><text-line style="letter-spacing:.06px">Temporary password:</text-line><text-line><span class="a">FindITCTF{CVE-</span><span class="k">2023-21036</span><span class="z">_Hk3MQu1gR3}</span></text-line><span slot="time">11:45</span></message-in>
<message-out>Noted with thanks<span slot="time">11:46</span></message-out>
<glitch-band></glitch-band></div><message-composer></message-composer>`);

define('scroll-track',`<style>
:host{display:flex;flex-direction:column;align-items:center;width:14px;background:#2c2c2c;flex:none;margin-left:auto}
i{border:5px solid transparent}.u{border-bottom:7px solid #9f9f9f;border-top:0;margin-top:5px}.d{border-top:7px solid #9f9f9f;border-bottom:0;margin-top:36px}
b{width:9px;height:188px;border-radius:5px;background:#9f9f9f;margin-top:502px}
</style><i class="u"></i><b></b><i class="d"></i>`);
define('page-view',`<style>
:host{display:flex;flex:1;min-height:0;padding-left:100px;background:linear-gradient(100deg,#353840,#2d3038 45%,#262932);box-shadow:inset 0 -2px #08080a}
</style><chat-picture></chat-picture><scroll-track></scroll-track>`);
define('browser-window',`<style>:host{display:flex;flex-direction:column;width:1471px;height:828px;overflow:hidden}</style><tab-strip></tab-strip><tool-bar></tool-bar><page-view></page-view>`);
</script>
</body>
</html>
